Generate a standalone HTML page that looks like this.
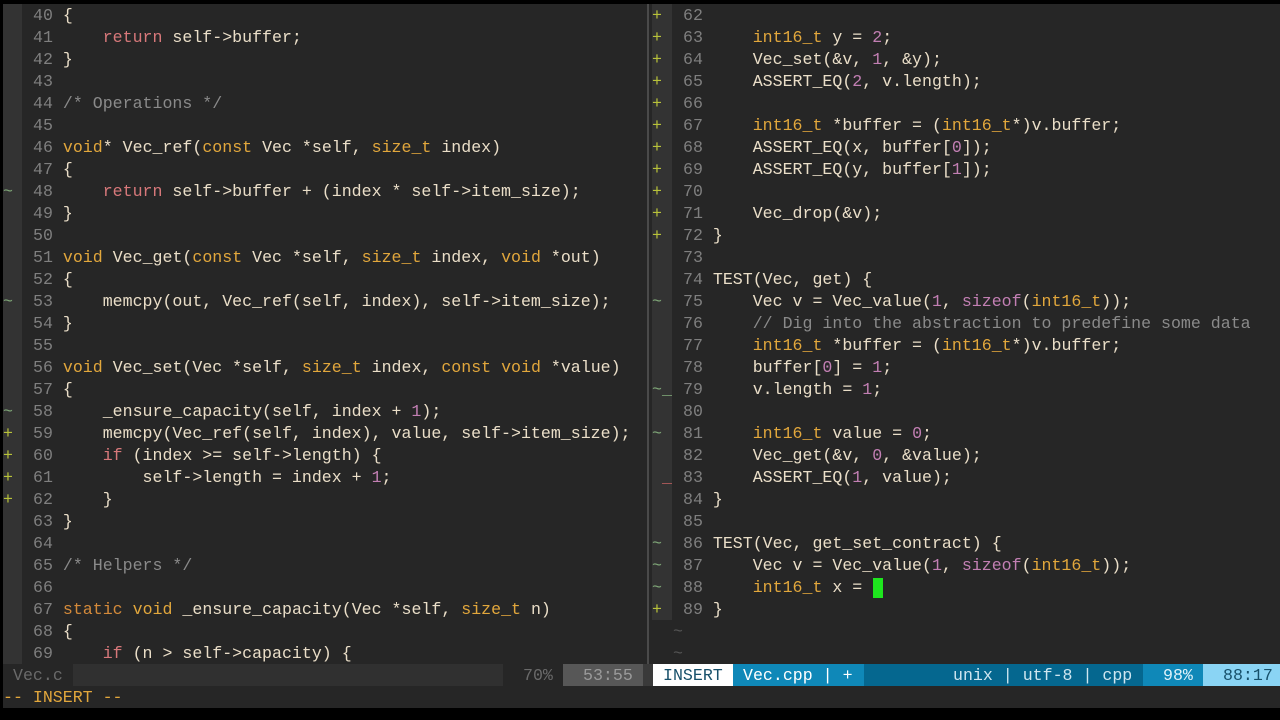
<!DOCTYPE html>
<html><head><meta charset="utf-8"><style>
html,body{margin:0;padding:0;background:#000;width:1280px;height:720px;overflow:hidden}
#scr{position:absolute;left:3px;top:4px;width:1277px;height:704px;background:#262626}
.l{position:absolute;height:22px;line-height:22px;font-family:"Liberation Mono",monospace;font-size:16.6px;white-space:pre;color:#eadec8}
.num{color:#7f7f7f}
.k{color:#d7787a}.t{color:#e2a73c}.s{color:#d48a3a}.n{color:#c27fb3}.c{color:#8a8a8a}
.sg{position:absolute;font-family:"Liberation Mono",monospace;font-size:16.6px;line-height:22px;height:22px;white-space:pre}
.p{color:#b8c23a}.w{color:#80a878}.r{color:#c06060}
</style></head><body>
<div id="scr"></div>
<div style="position:absolute;left:3px;top:4px;width:19px;height:660px;background:#333"></div>
<div style="position:absolute;left:652px;top:4px;width:20px;height:616px;background:#333"></div>
<div style="position:absolute;left:647px;top:4px;width:2px;height:660px;background:#4a4a4a"></div>
<div id="L"></div>
<!-- status -->
<div style="position:absolute;left:3px;top:664px;width:1277px;height:22px;background:#262626"></div>
<div style="position:absolute;left:73px;top:664px;width:430px;height:22px;background:#303030"></div>
<div class="l" style="left:13px;top:665px;color:#6a6a6a">Vec.c</div>
<div class="l" style="left:523px;top:665px;color:#6a6a6a">70%</div>
<div style="position:absolute;left:563px;top:664px;width:80px;height:22px;background:#575757"></div>
<div class="l" style="left:583px;top:665px;color:#9a9a9a">53:55</div>
<div style="position:absolute;left:643px;top:664px;width:10px;height:22px;background:#3a3a3a"></div>
<div style="position:absolute;left:653px;top:664px;width:80px;height:22px;background:#fff"></div>
<div class="l" style="left:663px;top:665px;color:#17506a">INSERT</div>
<div style="position:absolute;left:733px;top:664px;width:131px;height:22px;background:#0f88b8"></div>
<div class="l" style="left:743px;top:665px;color:#fff">Vec.cpp | +</div>
<div style="position:absolute;left:864px;top:664px;width:279px;height:22px;background:#05678f"></div>
<div class="l" style="left:953px;top:665px;color:#cfe6f0">unix | utf-8 | cpp</div>
<div style="position:absolute;left:1143px;top:664px;width:60px;height:22px;background:#0f88b8"></div>
<div class="l" style="left:1163px;top:665px;color:#e0f2fa">98%</div>
<div style="position:absolute;left:1203px;top:664px;width:77px;height:22px;background:#8ad4f4"></div>
<div class="l" style="left:1223px;top:665px;color:#17506a">88:17</div>
<div class="l" style="left:3px;top:687px;color:#e2a73c">-- INSERT --</div>
<div style="position:absolute;left:873px;top:578px;width:10px;height:20px;background:#1ee61e"></div>
<script>
const left=[
'{','    <span class="k">return</span> self->buffer;','}','','<span class="c">/* Operations */</span>','',
'<span class="t">void</span>* Vec_ref(<span class="t">const</span> Vec *self, <span class="t">size_t</span> index)','{',
'    <span class="k">return</span> self->buffer + (index * self->item_size);','}','',
'<span class="t">void</span> Vec_get(<span class="t">const</span> Vec *self, <span class="t">size_t</span> index, <span class="t">void</span> *out)','{',
'    memcpy(out, Vec_ref(self, index), self->item_size);','}','',
'<span class="t">void</span> Vec_set(Vec *self, <span class="t">size_t</span> index, <span class="t">const</span> <span class="t">void</span> *value)','{',
'    _ensure_capacity(self, index + <span class="n">1</span>);',
'    memcpy(Vec_ref(self, index), value, self->item_size);',
'    <span class="k">if</span> (index >= self->length) {',
'        self->length = index + <span class="n">1</span>;','    }','}','',
'<span class="c">/* Helpers */</span>','',
'<span class="s">static</span> <span class="t">void</span> _ensure_capacity(Vec *self, <span class="t">size_t</span> n)','{',
'    <span class="k">if</span> (n > self->capacity) {'];
const ls={48:'~',53:'~',58:'~',59:'+',60:'+',61:'+',62:'+'};
const right=['',
'    <span class="t">int16_t</span> y = <span class="n">2</span>;',
'    Vec_set(&amp;v, <span class="n">1</span>, &amp;y);',
'    ASSERT_EQ(<span class="n">2</span>, v.length);','',
'    <span class="t">int16_t</span> *buffer = (<span class="t">int16_t</span>*)v.buffer;',
'    ASSERT_EQ(x, buffer[<span class="n">0</span>]);',
'    ASSERT_EQ(y, buffer[<span class="n">1</span>]);','',
'    Vec_drop(&amp;v);','}','',
'TEST(Vec, get) {',
'    Vec v = Vec_value(<span class="n">1</span>, <span class="n">sizeof</span>(<span class="t">int16_t</span>));',
'    <span class="c">// Dig into the abstraction to predefine some data</span>',
'    <span class="t">int16_t</span> *buffer = (<span class="t">int16_t</span>*)v.buffer;',
'    buffer[<span class="n">0</span>] = <span class="n">1</span>;',
'    v.length = <span class="n">1</span>;','',
'    <span class="t">int16_t</span> value = <span class="n">0</span>;',
'    Vec_get(&amp;v, <span class="n">0</span>, &amp;value);',
'    ASSERT_EQ(<span class="n">1</span>, value);','}','',
'TEST(Vec, get_set_contract) {',
'    Vec v = Vec_value(<span class="n">1</span>, <span class="n">sizeof</span>(<span class="t">int16_t</span>));',
'    <span class="t">int16_t</span> x = ','}'];
const rs={62:'+',63:'+',64:'+',65:'+',66:'+',67:'+',68:'+',69:'+',70:'+',71:'+',72:'+',75:'~',79:'~_',81:'~',83:' _',86:'~',87:'~',88:'~',89:'+'};
let h='';
left.forEach((s,i)=>{const n=40+i,y=5+22*i;
 h+=`<div class="l" style="left:33px;top:${y}px"><span class="num">${n}</span> ${s}</div>`;
 if(ls[n])h+=`<div class="sg ${ls[n]=='+'?'p':'w'}" style="left:3px;top:${y}px">${ls[n]}</div>`;});
right.forEach((s,i)=>{const n=62+i,y=5+22*i;
 h+=`<div class="l" style="left:683px;top:${y}px"><span class="num">${n}</span> ${s}</div>`;
 if(rs[n]){let c=rs[n]=='+'?'p':(n==83?'r':'w');h+=`<div class="sg ${c}" style="left:652px;top:${y}px">${rs[n]}</div>`;}});
h+=`<div class="l num" style="left:673px;top:621px;color:#555">~</div><div class="l num" style="left:673px;top:643px;color:#555">~</div>`;
document.getElementById('L').innerHTML=h;
</script>
</body></html>
